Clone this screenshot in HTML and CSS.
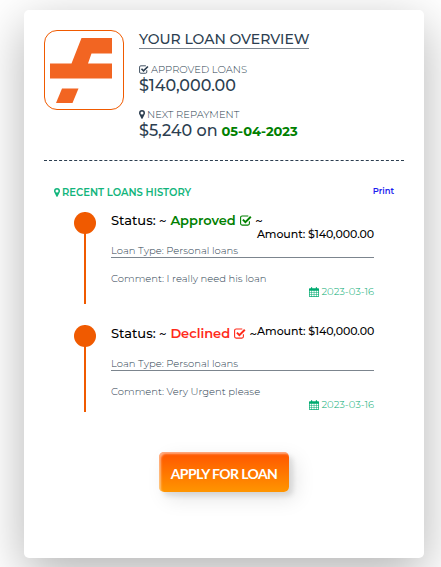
FILE: index.html
```
<!DOCTYPE html>
<html lang="en">
<head>
  <meta charset="UTF-8" />
  <meta name="viewport" content="width=device-width, initial-scale=1.0"/>
  <title>Loan Overview</title>
  <link rel="stylesheet" href="styles.css">
</head>
<body>

  <!-- Icon set -->
  <svg class="icon-set" width="0" height="0">
    <symbol id="check" viewBox="0 0 12 11">
      <path d="M9.4 6.3v2.3a1.5 1.5 0 0 1-1.5 1.5H2.1A1.5 1.5 0 0 1 .6 8.6V2.5A1.5 1.5 0 0 1 2.1 1h6.2" fill="none" stroke="currentColor" stroke-width="1.1"/>
      <path d="M2.900 4.600l2.500 2.500 5.400-5.300" fill="none" stroke="currentColor" stroke-width="2"/>
    </symbol>
    <symbol id="pin" viewBox="0 0 6 9">
      <path fill-rule="evenodd" d="M3 0a3 3 0 0 0-3 3c0 .5.1.9.3 1.300L2.400 8.600q.6.7 1.200 0L5.700 4.300C5.900 3.900 6 3.500 6 3a3 3 0 0 0-3-3zm0 1.500a1.500 1.500 0 1 1 0 3 1.500 1.500 0 0 1 0-3z" fill="currentColor"/>
    </symbol>
    <symbol id="calendar" viewBox="0 0 10 10">
      <path fill-rule="evenodd" d="M.7 1.300H2V.5q.6-.9 1.200 0v.8h3.600V.5q.6-.9 1.200 0v.8h1.300q.7 0 .7.700v7.300q0 .7-.7.700H.7Q0 10 0 9.300V2q0-.7.7-.7zM.7 3.700v1.500h1.700V3.700zm2.200 0v1.500h1.900V3.700zm2.400 0v1.500h1.900V3.700zm2.400 0v1.500h1.600V3.700zM.7 5.700v1.600h1.700V5.700zm2.200 0v1.600h1.900V5.700zm2.400 0v1.600h1.900V5.700zm2.400 0v1.600h1.600V5.700zM.7 7.800v1.500h1.700V7.800zm2.200 0v1.500h1.900V7.800zm2.400 0v1.500h1.900V7.800zm2.400 0v1.500h1.600V7.800z" fill="currentColor"/>
    </symbol>
  </svg>

  <div class="card">
    <div class="overview">
      <div class="logo">
        <svg width="62" height="66" viewBox="0 0 62 66">
          <path d="M31.500 0H62v15.500H41.500L38 25.500h24V40.500H0v-15h21.500z" fill="#f26522"/>
          <path d="M12 50.500h16.500L22.500 65H6z" fill="#f26522"/>
        </svg>
      </div>
      <div class="summary">
        <h1>YOUR LOAN OVERVIEW</h1>
        <p class="label"><svg width="10" height="9"><use href="#check"/></svg><span>APPROVED LOANS</span></p>
        <p class="value">$140,000.00</p>
        <p class="label next"><svg width="6" height="9"><use href="#pin"/></svg><span>NEXT REPAYMENT</span></p>
        <p class="value"><span>$5,240 on</span><b>05-04-2023</b></p>
      </div>
    </div>

    <div class="history-header">
      <h2><svg width="6" height="9"><use href="#pin"/></svg><span>RECENT LOANS HISTORY</span></h2>
      <a href="#">Print</a>
    </div>

    <div class="history">
      <div class="loan">
        <div class="marker"></div>
        <div class="details">
          <div class="loan-head stacked">
            <div class="status"><span>Status: ~</span><b class="approved">Approved</b><svg class="approved" width="12" height="11"><use href="#check"/></svg><span>~</span></div>
            <div class="amount">Amount: $140,000.00</div>
          </div>
          <p class="type">Loan Type: Personal loans</p>
          <p class="comment">Comment: I really need his loan</p>
          <p class="date"><svg width="10" height="10"><use href="#calendar"/></svg><span>2023-03-16</span></p>
        </div>
      </div>

      <div class="loan last">
        <div class="marker"></div>
        <div class="details">
          <div class="loan-head">
            <div class="status"><span>Status: ~</span><b class="declined">Declined</b><svg class="declined" width="12" height="11"><use href="#check"/></svg><span>~</span></div>
            <div class="amount">Amount: $140,000.00</div>
          </div>
          <p class="type">Loan Type: Personal loans</p>
          <p class="comment">Comment: Very Urgent please</p>
          <p class="date"><svg width="10" height="10"><use href="#calendar"/></svg><span>2023-03-16</span></p>
        </div>
      </div>
    </div>

    <button class="btn">APPLY FOR LOAN</button>
  </div>

</body>
</html>
```
FILE: styles.css
```
* {
  box-sizing: border-box;
}

body {
  margin: 0;
  height: 567px;
  padding: 10px 17px 0 24px;
  overflow: hidden;
  background-color: #fff;
  font-family: Montserrat, Inter, sans-serif;
  white-space: nowrap;
}

h1,
h2,
p {
  margin: 0;
}

svg {
  flex: none;
}

.icon-set {
  position: absolute;
}

.card {
  width: 400px;
  height: 548px;
  padding: 20px;
  background-color: #fff;
  border-radius: 5px;
  box-shadow: 0 15px 50px rgba(0, 0, 0, 0.3);
}

.overview {
  display: flex;
  gap: 15px;
  height: 131px;
  border-bottom: 1px dashed #2c3e50;
  color: #2c3e50;
}

.logo {
  width: 80px;
  height: 80px;
  padding: 7px 0 0 5px;
  border: 1px solid #f05a00;
  border-radius: 13px;
}

.summary h1 {
  width: 170px;
  border-bottom: 1px solid #7c858e;
  font-size: 14px;
  font-weight: 500;
  line-height: 18px;
}

.label {
  display: flex;
  align-items: center;
  gap: 2px;
  margin-top: 14px;
  font-size: 10px;
  font-weight: 300;
  line-height: 13px;
}

.label.next {
  margin-top: 13px;
}

.value {
  display: flex;
  gap: 4px;
  font-size: 16px;
  font-weight: 500;
  line-height: 19px;
}

.value b {
  color: #008000;
  font-size: 13px;
  font-weight: 700;
  line-height: 21px;
}

.history-header {
  display: flex;
  justify-content: space-between;
  margin-top: 23px;
  padding: 0 10px;
}

.history-header h2 {
  display: flex;
  align-items: center;
  gap: 2px;
  color: #12b57c;
  font-size: 10px;
  font-weight: 600;
  line-height: 17px;
}

.history-header a {
  color: #1c1cf0;
  font-size: 8.4px;
  font-weight: 600;
  line-height: 14px;
  text-decoration: none;
}

.history {
  margin-top: 11px;
  padding: 0 30px;
}

.loan {
  display: flex;
  gap: 15px;
  height: 92px;
}

.loan.last {
  height: 87px;
  margin-top: 21px;
}

.marker {
  width: 22px;
  background: linear-gradient(#f05a00, #f05a00) center / 2px 100% no-repeat;
}

.marker::before {
  content: "";
  display: block;
  height: 22px;
  border-radius: 50%;
  background-color: #f05a00;
}

.details {
  width: 263px;
  color: #2c3e50;
  font-size: 10px;
  font-weight: 300;
  line-height: 13px;
}

.loan-head {
  display: flex;
  justify-content: space-between;
  height: 27px;
  color: #000;
}

.loan-head.stacked {
  flex-direction: column;
  justify-content: flex-start;
}

.status {
  display: flex;
  align-items: center;
  gap: 3.7px;
  height: 17px;
  font-size: 13px;
  font-weight: 500;
}

.status b {
  font-weight: 600;
}

.approved {
  color: #008000;
}

.declined {
  color: #ff2a1a;
}

.amount {
  font-size: 11px;
  font-weight: 500;
  line-height: 12px;
  letter-spacing: -0.06px;
}

.stacked .amount {
  align-self: flex-end;
  line-height: 10px;
}

.type {
  margin-top: 5px;
  border-bottom: 1px solid #7c858e;
}

.comment {
  margin-top: 14px;
}

.date {
  display: flex;
  align-items: center;
  justify-content: flex-end;
  gap: 2px;
  margin-top: 1px;
  color: #00aa70;
  line-height: 12px;
}

.btn {
  display: block;
  width: 130px;
  height: 40px;
  margin: 40px 0 0 115px;
  padding: 2px 0 0;
  border: none;
  border-radius: 5px;
  background: linear-gradient(#ff5500, #ff9500);
  box-shadow: inset 2px 2px 2px rgba(255, 255, 255, 0.5), 7px 7px 20px rgba(0, 0, 0, 0.1), 4px 4px 5px rgba(0, 0, 0, 0.1);
  color: #fff;
  font-family: Lato, sans-serif;
  font-size: 14px;
  font-weight: 700;
  letter-spacing: -0.6px;
}
```
